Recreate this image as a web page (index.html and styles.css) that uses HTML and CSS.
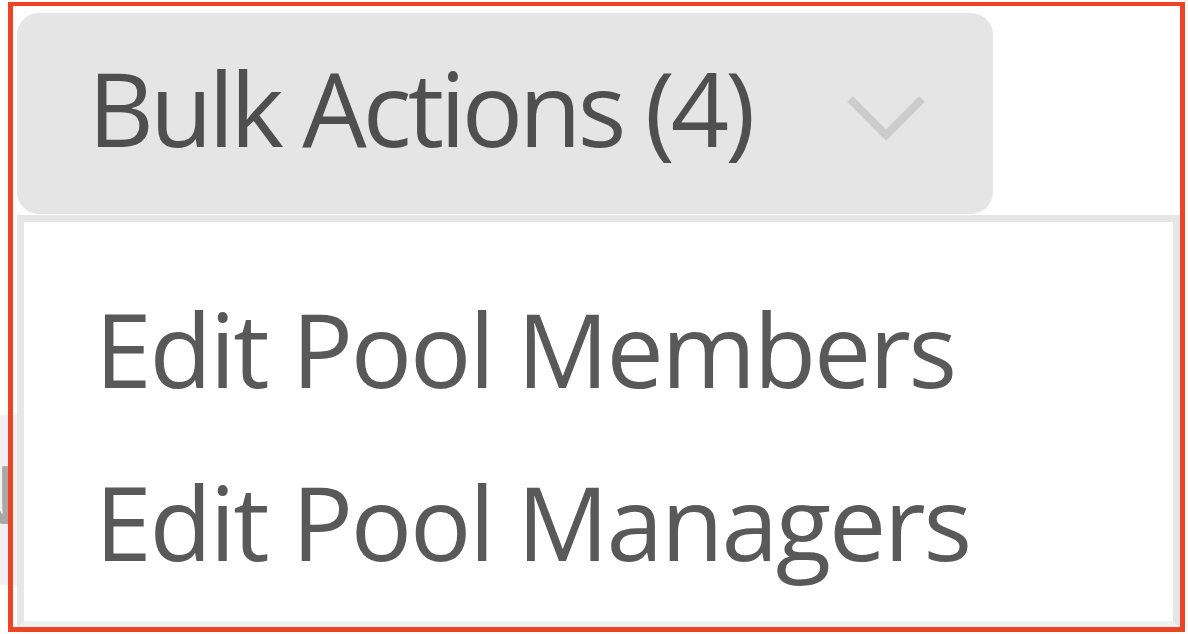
FILE: index.html
```html
<!DOCTYPE html>
<html lang="en">
<head>
<meta charset="utf-8">
<title>Bulk Actions</title>
<link rel="stylesheet" href="styles.css">
</head>
<body>
<div class="stage">
  <div class="behind"><div class="behind-box"><span class="behind-letter">N</span></div></div>
  <div class="dropdown">
    <button class="trigger" type="button">
      <span class="trigger-label">Bulk Actions (4)</span>
      <svg class="chevron" width="80" height="46" viewBox="0 0 80 46" aria-hidden="true">
        <polyline points="3,4 39,40 75,4" fill="none" stroke="#cccccc" stroke-width="8"/>
      </svg>
    </button>
    <ul class="menu">
      <li class="menu-item">Edit Pool Members</li>
      <li class="menu-item">Edit Pool Managers</li>
    </ul>
  </div>
  <div class="highlight"></div>
</div>
</body>
</html>
```

FILE: styles.css
```css
html, body {
  margin: 0;
  padding: 0;
  background: #ffffff;
}

body {
  width: 1188px;
  height: 634px;
  overflow: hidden;
  font-family: "Open Sans", "DejaVu Sans", sans-serif;
}

.stage {
  position: relative;
  display: flex;
  width: 1188px;
  height: 634px;
}

.behind {
  width: 17px;
  flex: none;
  padding-top: 415px;
  box-sizing: border-box;
  overflow: hidden;
}

.behind-box {
  width: 17px;
  height: 170px;
  background: #f1f1f1;
  position: relative;
  overflow: hidden;
}

.behind-letter {
  position: absolute;
  left: -44px;
  top: 38px;
  font-size: 80px;
  line-height: 1;
  color: #a8a8a8;
}

.dropdown {
  display: flex;
  flex-direction: column;
  padding-top: 13px;
}

.trigger {
  display: flex;
  align-items: center;
  width: 976px;
  height: 201px;
  box-sizing: border-box;
  margin: 0 0 1px 0;
  padding: 0 0 12px 71px;
  border: none;
  border-radius: 22px;
  background: #e5e5e5;
  font-family: inherit;
  font-size: 102px;
  line-height: normal;
  letter-spacing: -4px;
  color: #4f4f4f;
  text-align: left;
}

.trigger-label {
  flex: none;
}

.chevron {
  margin-left: 96px;
  margin-top: 20px;
  flex: none;
}

.menu {
  list-style: none;
  margin: 0;
  width: 1163px;
  height: 413px;
  box-sizing: border-box;
  padding: 40px 0 0 71px;
  border: 7px solid #e6e6e6;
  border-bottom-color: #edf4ef;
  background: #ffffff;
}

.menu-item {
  font-size: 102px;
  line-height: 173px;
  height: 173px;
  letter-spacing: -2.2px;
  color: #595959;
  white-space: nowrap;
}

.highlight {
  position: absolute;
  left: 8px;
  top: 2px;
  width: 1177px;
  height: 630px;
  box-sizing: border-box;
  border: 5px solid #ee4424;
  border-top-width: 4px;
  pointer-events: none;
}
```
